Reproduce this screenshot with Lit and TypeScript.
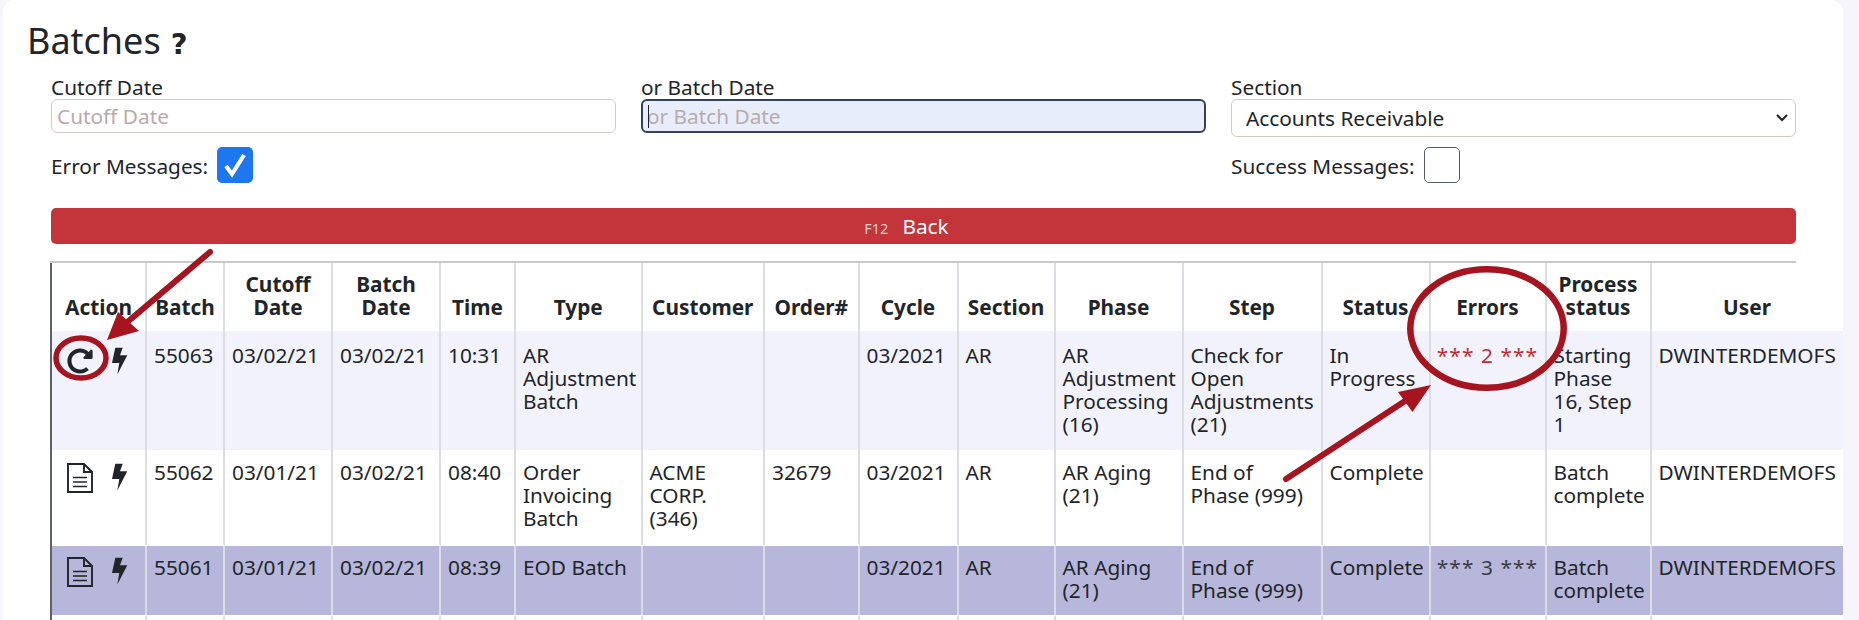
import { LitElement, html, css, svg } from "lit";
import { customElement } from "lit/decorators.js";

const widths = [95, 78, 108, 108, 75, 126.5, 122.5, 94.5, 99, 97, 128, 139, 108, 116, 105, 193];
const heads = ["Action", "Batch", "Cutoff Date", "Batch Date", "Time", "Type", "Customer", "Order#", "Cycle", "Section", "Phase", "Step", "Status", "Errors", "Process status", "User"];

interface Row {
  cls: string;
  icon: "redo" | "file";
  cells: string[];
}
const rows: Row[] = [
  { cls: "r1", icon: "redo", cells: ["55063", "03/02/21", "03/02/21", "10:31", "AR Adjustment Batch", "", "", "03/2021", "AR", "AR Adjustment Processing (16)", "Check for Open Adjustments (21)", "In Progress", "*** 2 ***", "Starting Phase 16, Step 1", "DWINTERDEMOFS"] },
  { cls: "r2", icon: "file", cells: ["55062", "03/01/21", "03/02/21", "08:40", "Order Invoicing Batch", "ACME CORP. (346)", "32679", "03/2021", "AR", "AR Aging (21)", "End of Phase (999)", "Complete", "", "Batch complete", "DWINTERDEMOFS"] },
  { cls: "r3", icon: "file", cells: ["55061", "03/01/21", "03/02/21", "08:39", "EOD Batch", "", "", "03/2021", "AR", "AR Aging (21)", "End of Phase (999)", "Complete", "*** 3 ***", "Batch complete", "DWINTERDEMOFS"] },
];

const redo = svg`<svg class="ic redo" viewBox="0 0 512 512"><path fill="currentColor" d="M256.455 8c66.269.119 126.437 26.233 170.859 68.685l35.715-35.715C478.149 25.851 504 36.559 504 57.941V192c0 13.255-10.745 24-24 24H345.941c-21.382 0-32.09-25.851-16.971-40.971l41.75-41.75c-30.864-28.899-70.801-44.907-113.23-45.273-92.398-.798-170.283 73.977-169.484 169.442C88.764 348.009 162.184 424 256 424c41.127 0 79.997-14.678 110.629-41.556 4.743-4.161 11.906-3.908 16.368.553l39.662 39.662c4.872 4.872 4.631 12.815-.482 17.433C378.202 479.813 319.926 504 256 504 119.034 504 8.001 392.967 8 256.002 7.999 119.193 119.646 7.755 256.455 8z"/></svg>`;
const file = svg`<svg class="ic file" viewBox="0 0 26 30"><path fill="none" stroke="currentColor" stroke-width="1.9" d="M1 1h16l8 8v20H1zM17 1v8h8"/><path fill="none" stroke="currentColor" stroke-width="1.7" d="M6 14.5h14M6 19h14M6 23.5h14"/></svg>`;
const bolt = svg`<svg class="ic bolt" viewBox="0 0 16 28"><path fill="currentColor" d="M3.3.7h7.4L8 8.3h7.3L5.3 27.5 7.3 16H0z"/></svg>`;

@customElement("app-root")
export class AppRoot extends LitElement {
  static styles = css`
    :host { display: block; width: 1859px; height: 620px; overflow: hidden; background: #f5f5fb; position: relative;
      font-family: "Noto Sans", sans-serif; color: #212529; font-size: 20.8px; }
    .card { box-sizing: border-box; margin-left: 3px; width: 1840px; height: 620px; background: #fff; border-radius: 12px 12px 0 0; padding: 20px 46px 0 24px; overflow: hidden; }
    h2 { margin: 0; height: 42px; font-size: 36px; line-height: 42px; font-weight: 400; display: flex; align-items: center; gap: 10px; }
    .q { font-family: "DejaVu Sans", sans-serif; font-weight: 700; font-size: 29px; line-height: 40px; padding-top: 6px; }
    .form { margin: 15px 0 0 24px; display: grid; grid-template-columns: repeat(3, 565px); column-gap: 25px; }
    .field { display: flex; flex-direction: column; }
    label { line-height: 20px; height: 22px; }
    input.text { box-sizing: border-box; height: 34px; width: 100%; border: 1px solid #d3c9c6; border-radius: 6px; padding: 0 5px; font: inherit; background: #fff; outline: none; margin: 0; }
    input.text::placeholder { color: #b9abab; opacity: 1; }
    .focus { position: relative; }
    input.text.on { background: #e8edfc; border: 2px solid #33415c; padding: 0 4px; }
    .caret { position: absolute; left: 7px; top: 6px; width: 1px; height: 23px; background: #222; }
    .sel { position: relative; height: 38px; }
    select { box-sizing: border-box; appearance: none; height: 38px; width: 100%; border: 1px solid #d3c9c6; border-radius: 6px; padding: 0 14px; font: inherit; color: #212529; background: #fff; outline: none; }
    .chev { position: absolute; right: 8px; top: 15px; width: 12px; height: 8px; pointer-events: none; }
    .checks { display: grid; grid-column: 1 / -1; grid-template-columns: repeat(3, 565px); column-gap: 25px; height: 36px; }
    .chk { display: flex; align-items: center; gap: 9px; }
    .lbl { padding-top: 2px; }
    .box { box-sizing: border-box; width: 36px; height: 36px; border-radius: 5px; display: flex; align-items: center; justify-content: center; }
    .box.on { background: #1d77f0; }
    .box.off { border: 1px solid #555c66; background: #fff; }
    .box svg { width: 24px; height: 26px; }
    .row2 { margin-top: 10px; }
    .back { box-sizing: border-box; margin: 25px 0 0 24px; width: 1745px; height: 36px; background: #c4343b; border-radius: 5px; color: #fff; display: flex; align-items: center; justify-content: center; gap: 14px; padding-right: 34px; font-size: 20.8px; }
    .back small { font-size: 14.5px; color: #e6c8ca; padding-top: 4px; }
    .wrap { margin: 17px 0 0 23px; width: 1746px; border-top: 2px solid #c9c9d2; height: 360px; }
    table { border-collapse: separate; border-spacing: 0; table-layout: fixed; width: 1792px; border-left: 2px solid #5d6168; }
    th, td { box-sizing: border-box; border-right: 2px solid #dcdde2; padding: 0 7px; vertical-align: top; line-height: 23.2px; font-weight: 400; }
    th { font-weight: 700; text-align: center; vertical-align: bottom; height: 68px; padding-bottom: 12px; }
    tr.r1 td { background: #f2f2fc; height: 119px; padding-top: 12.5px; }
    tr.r2 td { background: #fff; height: 96px; border-bottom: 2px solid #fff; padding-top: 10.5px; }
    tr.r3 td { background: #b7b7db; height: 69px; padding-top: 9.5px; }
    tr.r4 td { background: #fff; height: 40px; border-top: 2px solid #fff; }
    td.err { color: #c22a32; text-align: center; white-space: nowrap; letter-spacing: 1.1px; padding-left: 0; padding-right: 0; }
    tr.r3 td.err { color: #3b3b47; }
    tr td.act { padding-left: 15px; padding-right: 0; }
    tr.r1 td.act { padding-top: 16px; }
    tr.r2 td.act { padding-top: 13px; }
    tr.r3 td.act { padding-top: 11px; }
    .icons { display: flex; align-items: flex-start; gap: 19px; }
    .ic { display: block; color: #212529; }
    .redo { width: 26px; height: 26px; margin-top: 1px; }
    .file { width: 26px; height: 30px; }
    .bolt { width: 16px; height: 28px; }
    .notes { position: absolute; left: 0; top: 0; width: 1859px; height: 620px; pointer-events: none; }
  `;

  render() {
    return html`
      <div class="card">
        <h2>Batches <span class="q">?</span></h2>
        <div class="form">
          <div class="field"><label>Cutoff Date</label><input class="text" placeholder="Cutoff Date" readonly /></div>
          <div class="field"><label>or Batch Date</label><div class="focus"><input class="text on" placeholder="or Batch Date" readonly /><span class="caret"></span></div></div>
          <div class="field"><label>Section</label>
            <div class="sel"><select><option>Accounts Receivable</option></select>
              <svg class="chev" viewBox="0 0 12 8"><path fill="none" stroke="#222" stroke-width="2" d="M1 1l5 5 5-5"/></svg></div></div>
        </div>
        <div class="form row2">
          <div class="checks">
            <div class="chk"><span class="lbl">Error Messages:</span><span class="box on"><svg viewBox="0 0 24 26"><path fill="none" stroke="#fff" stroke-width="4.2" d="M3 14l6 8L21 3"/></svg></span></div>
            <div></div>
            <div class="chk"><span class="lbl">Success Messages:</span><span class="box off"></span></div>
          </div>
        </div>
        <div class="back"><small>F12</small>Back</div>
        <div class="wrap">
          <table>
            <colgroup>${widths.map((w) => html`<col style="width:${w}px" />`)}</colgroup>
            <thead><tr>${heads.map((h) => html`<th>${h}</th>`)}</tr></thead>
            <tbody>
              ${rows.map((r) => html`<tr class=${r.cls}>
                <td class="act"><div class="icons">${r.icon === "redo" ? redo : file}${bolt}</div></td>
                ${r.cells.map((c, i) => html`<td class=${i === 12 ? "err" : ""}>${c}</td>`)}
              </tr>`)}
              <tr class="r4">${widths.map(() => html`<td></td>`)}</tr>
            </tbody>
          </table>
        </div>
      </div>
      <svg class="notes" viewBox="0 0 1859 620">
        <g fill="#a5141f" stroke="none">
          <path d="M118 312L139 331L107 340Z"/>
          <path d="M1398 392L1412.5 412L1431 385Z"/>
        </g>
        <g fill="none" stroke="#a5141f">
          <line x1="210" y1="252" x2="125" y2="324" stroke-width="6" stroke-linecap="round"/>
          <line x1="1286" y1="479" x2="1405" y2="401" stroke-width="6" stroke-linecap="round"/>
          <ellipse cx="81" cy="358" rx="25" ry="20" stroke-width="5.5"/>
          <ellipse cx="1487" cy="328.5" rx="76.7" ry="59.2" stroke-width="6.5"/>
        </g>
      </svg>
    `;
  }
}
